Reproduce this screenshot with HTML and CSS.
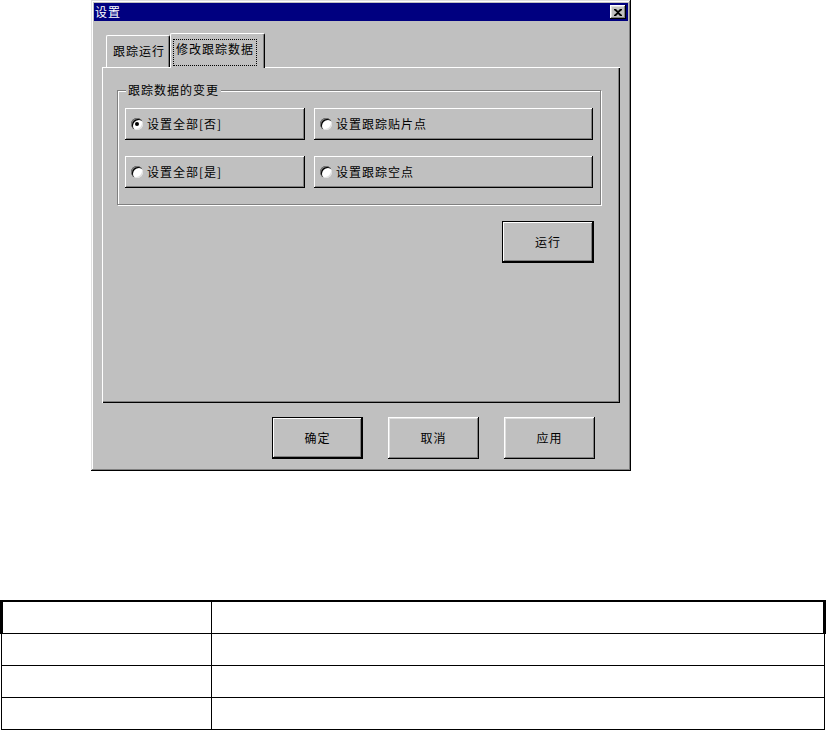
FILE: index.html
```html
<!DOCTYPE html>
<html lang="zh-CN">
<head>
  <meta charset="UTF-8" />
  <title>设置</title>
  <link rel="stylesheet" href="styles.css">
</head>
<body>

  <div class="dialog">
    <div class="titlebar">
      <span class="title">设置</span>
      <span class="close">
        <svg width="8" height="7" viewBox="0 0 8 7">
          <path d="M0 0h2l2 2 2-2h2v1L5 3.5 8 6v1H6L4 5 2 7H0V6l3-2.5L0 1z" fill="#000"/>
        </svg>
      </span>
    </div>

    <div class="tabs">
      <div class="tab">跟踪运行</div>
      <div class="tab active"><span class="focus">修改跟踪数据</span></div>
    </div>

    <div class="panel">
      <fieldset class="group">
        <legend>跟踪数据的变更</legend>
        <div class="choices">
          <div class="choice"><span class="radio checked"></span>设置全部[否]</div>
          <div class="choice"><span class="radio"></span>设置跟踪贴片点</div>
          <div class="choice"><span class="radio"></span>设置全部[是]</div>
          <div class="choice"><span class="radio"></span>设置跟踪空点</div>
        </div>
      </fieldset>
      <div class="run-row">
        <div class="btn default run">运行</div>
      </div>
    </div>

    <div class="actions">
      <div class="btn default">确定</div>
      <div class="btn">取消</div>
      <div class="btn">应用</div>
    </div>
  </div>

  <table class="grid">
    <tr class="head"><td class="c1"></td><td></td></tr>
    <tr><td class="c1"></td><td></td></tr>
    <tr><td class="c1"></td><td></td></tr>
    <tr><td class="c1"></td><td></td></tr>
  </table>

</body>
</html>
```

FILE: styles.css
```css
body {
  margin: 0;
  background: #fff;
  font: 12px/16px "Noto Sans CJK SC", "DejaVu Sans", sans-serif;
  color: #000;
}

/* window frame */
.dialog {
  width: 540px;
  height: 471px;
  margin-left: 91px;
  box-sizing: border-box;
  padding: 3px 3px 0 3px;
  background: #c0c0c0;
  letter-spacing: 1px;
  box-shadow:
    inset -1px -1px #000,
    inset 1px 1px #dfdfdf,
    inset -2px -2px #808080,
    inset 2px 2px #fff;
}

.titlebar {
  height: 18px;
  background: #000080;
  color: #fff;
  display: flex;
  align-items: center;
  justify-content: space-between;
  padding: 0 2px 0 1px;
}

.close {
  width: 16px;
  height: 14px;
  box-sizing: border-box;
  background: #c0c0c0;
  display: flex;
  align-items: center;
  justify-content: center;
  box-shadow:
    inset -1px -1px #000,
    inset 1px 1px #fff,
    inset -2px -2px #808080,
    inset 2px 2px #dfdfdf;
}

/* tabs */
.tabs {
  display: flex;
  align-items: flex-end;
  margin: 12px 8px 0 8px;
  padding-left: 4px;
  height: 34px;
}

.tab {
  width: 64px;
  height: 32px;
  box-sizing: border-box;
  padding-left: 6px;
  line-height: 30px;
  border-left: 1px solid #fff;
  border-top: 1px solid #fff;
  border-right: 1px solid #000;
  border-radius: 2px 2px 0 0;
  box-shadow: inset -1px 0 #808080;
  background: #c0c0c0;
}

.tab.active {
  width: 95px;
  height: 35px;
  margin-bottom: -1px;
  padding: 6px 0 0 3px;
  line-height: 16px;
  position: relative;
  z-index: 1;
}

.focus {
  display: inline-block;
  padding: 1px 2px 8px 2px;
  outline: 1px dotted #000;
  outline-offset: 0;
}

.panel {
  height: 336px;
  margin: 0 8px;
  box-sizing: border-box;
  padding: 15px 15px 0 15px;
  box-shadow:
    inset 1px 1px #fff,
    inset -1px -1px #000,
    inset -2px -2px #808080;
}

/* group box */
.group {
  width: 484px;
  box-sizing: border-box;
  margin: 0;
  padding: 10px 7px 16px 7px;
  border: 1px solid #808080;
  box-shadow: inset 1px 1px #fff, 1px 1px #fff;
}

.group legend {
  padding: 0 2px;
  margin-left: 1px;
  background: #c0c0c0;
}

.choices {
  display: grid;
  grid-template-columns: 180px 279px;
  column-gap: 9px;
  row-gap: 16px;
}

.choice {
  height: 32px;
  display: flex;
  align-items: center;
  gap: 4px;
  padding-left: 6px;
  box-shadow:
    inset -1px -1px #000,
    inset 1px 1px #fff,
    inset -2px -2px #808080;
}

.radio {
  width: 12px;
  height: 12px;
  border-radius: 50%;
  background: #fff;
  box-shadow:
    inset 1px 1px #808080,
    inset 2px 2px #000,
    inset -1px -1px #dfdfdf;
  display: flex;
  align-items: center;
  justify-content: center;
}

.radio.checked::after {
  content: "";
  width: 4px;
  height: 4px;
  border-radius: 50%;
  background: #000;
}

.run-row {
  display: flex;
  justify-content: flex-end;
  width: 484px;
  padding-right: 7px;
  box-sizing: border-box;
  margin-top: 16px;
}

/* push buttons */
.btn {
  width: 90px;
  height: 41px;
  display: flex;
  align-items: center;
  justify-content: center;
  box-sizing: border-box;
  box-shadow:
    inset -1px -1px #000,
    inset 1px 1px #fff,
    inset -2px -2px #808080,
    inset 2px 2px #dfdfdf;
}

.btn.default {
  border: 1px solid #000;
  box-shadow:
    inset -1px -1px #000,
    inset 1px 1px #fff,
    inset -2px -2px #808080;
}

.run {
  width: 92px;
  height: 42px;
}

.actions {
  display: flex;
  justify-content: flex-end;
  gap: 25px;
  margin-top: 14px;
  padding-right: 33px;
}

.actions .btn {
  width: 91px;
  height: 42px;
}

/* blank table under the screenshot */
.grid {
  width: 826px;
  margin-top: 129px;
  border-collapse: collapse;
}

.grid td {
  height: 31px;
  padding: 0;
  border: 1px solid #000;
}

.grid .c1 {
  width: 208px;
}

.grid tr.head td {
  border-top: 2px solid #000;
}

.grid tr.head td:first-child {
  border-left: 3px solid #000;
}

.grid tr.head td:last-child {
  border-right: 3px solid #000;
}
```
